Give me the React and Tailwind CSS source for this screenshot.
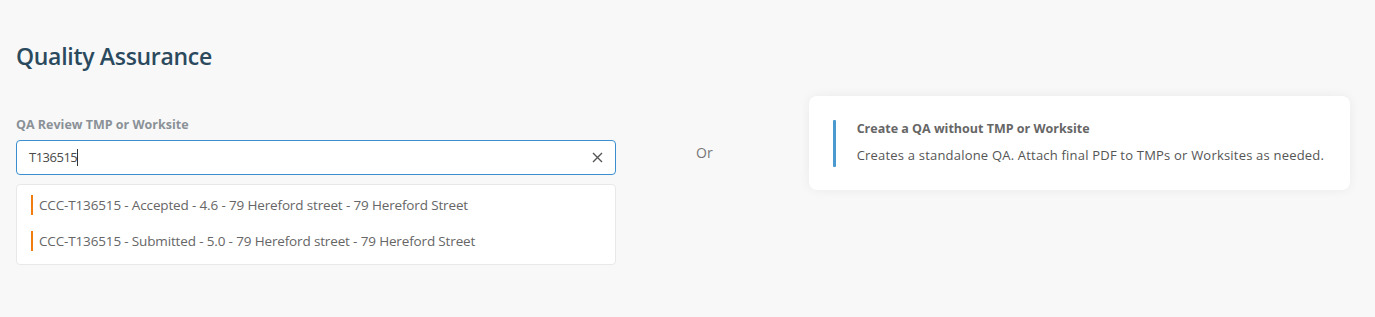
export default function App() {
  const results = [
    'CCC-T136515 - Accepted - 4.6 - 79 Hereford street - 79 Hereford Street',
    'CCC-T136515 - Submitted - 5.0 - 79 Hereford street - 79 Hereford Street',
  ]

  return (
    <div
      className="w-[1375px] h-[317px] bg-[#f8f8f8] px-4 pt-[40px]"
      style={{ fontFamily: '"Open Sans", "Noto Sans", sans-serif' }}
    >
      <h1 className="text-[23px] leading-[32px] font-semibold text-[#2b4a5e] tracking-[-0.3px]">Quality Assurance</h1>

      <div className="mt-[45px] flex items-start">
        <div className="w-[600px]">
          <div className="text-[12.5px] leading-[16px] font-bold text-[#8a9197]">QA Review TMP or Worksite</div>
          <div className="mt-[7px] h-[35px] rounded-[4px] border border-[#3b8fd0] bg-white flex items-center pl-3 pr-3">
            <span className="text-[13px] text-[#4a4a4a] tracking-[-0.5px]">T136515</span>
            <span className="w-px h-[17px] bg-[#333]" />
            <span className="ml-auto text-[#555]">
              <svg width="11" height="11" viewBox="0 0 11 11" fill="none" stroke="currentColor" strokeWidth="1.4">
                <path d="M1 1l9 9M10 1l-9 9" />
              </svg>
            </span>
          </div>
          <div className="mt-[9px] h-[81px] rounded-[4px] border border-[#e8e8e8] bg-white pt-[8px] pl-[14px]">
            {results.map((r) => (
              <div key={r} className="h-[36px] flex items-start">
                <span className="mt-[2px] w-[2px] h-[20px] bg-[#f07d10]" />
                <span className="ml-[6px] text-[13.5px] leading-[24px] text-[#666] tracking-[-0.15px]">{r}</span>
              </div>
            ))}
          </div>
        </div>

        <div className="ml-[80px] mt-[25px] text-[14px] text-[#777]">Or</div>

        <div className="ml-[96px] -mt-[21px] w-[541px] h-[94px] rounded-[8px] bg-white shadow-[0_0_12px_rgba(0,0,0,0.06)] flex items-start pl-[24px] pt-[24px]">
          <span className="w-[3px] h-[47px] rounded-[1px] bg-[#4a9ad0]" />
          <div className="ml-[21px]">
            <div className="text-[12.5px] leading-[18px] font-bold text-[#666]">Create a QA without TMP or Worksite</div>
            <div className="mt-[8px] text-[13px] leading-[18px] text-[#555] tracking-[0.2px]">
              Creates a standalone QA. Attach final PDF to TMPs or Worksites as needed.
            </div>
          </div>
        </div>
      </div>
    </div>
  )
}
